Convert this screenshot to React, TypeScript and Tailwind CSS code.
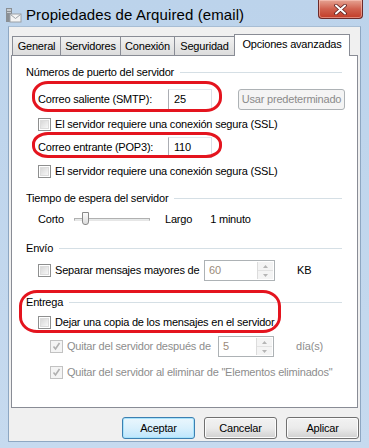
import React from "react";

const F = { fontFamily: '"Segoe UI", "Liberation Sans", Arial, sans-serif' };

function Check({ disabled = false, checked = false }: { disabled?: boolean; checked?: boolean }) {
  return (
    <div
      className={
        "w-[13px] h-[13px] shrink-0 border flex items-center justify-center " +
        (disabled ? "border-[#c2c2c2] bg-[#f4f4f4]" : "border-[#8e8f8f] bg-white")
      }
    >
      <div
        className={
          "w-[9px] h-[9px] flex items-center justify-center " +
          (disabled ? "bg-[#f4f4f4]" : "bg-gradient-to-br from-[#d8d8d8] to-[#f7f7f7] border border-[#dcdcdc]")
        }
      >
        {checked && (
          <svg width="9" height="9" viewBox="0 0 9 9">
            <path d="M1.5 4.5 L3.5 7 L7.5 1" fill="none" stroke="#b0b0b0" strokeWidth="1.6" />
          </svg>
        )}
      </div>
    </div>
  );
}

function Group({ label, mt }: { label: string; mt: string }) {
  return (
    <div className={"flex items-center h-[16px] whitespace-nowrap " + mt}>
      <span>{label}</span>
      <div className="flex-1 h-px bg-[#d5dfe5] ml-[6px]" />
    </div>
  );
}

function Spin({ value, w }: { value: string; w: string }) {
  return (
    <div className={"h-[21px] shrink-0 border border-[#adb2b5] bg-white flex " + w}>
      <div className="flex-1 pl-[4px] text-[#9a8a7a] leading-[19px]">{value}</div>
      <div className="w-[16px] flex flex-col border-l border-[#dcdcdc] my-[1px] mr-[1px]">
        <div className="flex-1 flex items-center justify-center border-b border-[#e2e2e2] bg-[#f4f4f4]">
          <svg width="5" height="3" viewBox="0 0 5 3"><path d="M0 3 L2.5 0 L5 3Z" fill="#b5b5b5" /></svg>
        </div>
        <div className="flex-1 flex items-center justify-center bg-[#f4f4f4]">
          <svg width="5" height="3" viewBox="0 0 5 3"><path d="M0 0 L2.5 3 L5 0Z" fill="#b5b5b5" /></svg>
        </div>
      </div>
    </div>
  );
}

function Btn({ label, def = false }: { label: string; def?: boolean }) {
  return (
    <div
      className={
        "w-[73px] h-[22px] rounded-[3px] border flex items-center justify-center text-black " +
        (def
          ? "border-[#3c7fb1] bg-gradient-to-b from-[#eaf6fd] via-[#d9f0fc] to-[#bee6fd] shadow-[inset_0_0_0_1px_#a7e3fb]"
          : "border-[#707070] bg-gradient-to-b from-[#f2f2f2] via-[#ebebeb] to-[#d0d0d0] shadow-[inset_0_0_0_1px_#fcfcfc]")
      }
    >
      {label}
    </div>
  );
}

export default function App() {
  return (
    <div
      className="relative w-[369px] h-[448px] overflow-hidden bg-gradient-to-b from-[#bcd3eb] to-[#c6daef] text-black"
      style={F}
    >
      {/* Title bar */}
      <div className="h-[25px] flex items-center pl-[5px] relative">
        <svg width="17" height="17" viewBox="0 0 17 17" className="mt-[5px]">
          <rect x="1" y="1" width="6" height="14" fill="#8a8f94" />
          <rect x="2" y="2" width="4" height="2" fill="#c8ccd0" />
          <rect x="2" y="5" width="4" height="1" fill="#c8ccd0" />
          <rect x="5" y="7" width="11" height="8" fill="#f4f4f4" stroke="#9aa0a6" />
          <path d="M5.5 7.5 L10.5 11.5 L15.5 7.5" fill="none" stroke="#9aa0a6" />
        </svg>
        <span className="ml-[4px] text-[15px] mt-[6px] tracking-[0.1px]">Propiedades de Arquired (email)</span>
        <div className="absolute right-[6px] top-0 w-[45px] h-[19px] rounded-b-[4px] border border-t-0 border-[#6b2a2a] bg-gradient-to-b from-[#e5a393] via-[#d0614f] to-[#c23a26] flex items-center justify-center shadow-[inset_0_0_0_1px_rgba(255,210,200,0.5)]">
          <svg width="13" height="11" viewBox="0 0 13 11">
            <path d="M2 1.5 L11 9.5 M11 1.5 L2 9.5" stroke="#5a1e1e" strokeWidth="3.6" strokeLinecap="round" />
            <path d="M2 1.5 L11 9.5 M11 1.5 L2 9.5" stroke="#ffffff" strokeWidth="2" strokeLinecap="round" />
          </svg>
        </div>
      </div>

      {/* Client area */}
      <div className="absolute left-[8px] right-[8px] top-[26px] bottom-[6px] bg-[#f0f0f0] border border-[#8ea7c2] border-t-[#a7bdd4] text-[11px] tracking-[-0.2px] whitespace-nowrap">
        {/* Tabs */}
        <div className="relative h-[28px] pl-[3px] pt-[7px] flex items-end">
          {[
            ["General", "w-[49px]"],
            ["Servidores", "w-[61px]"],
            ["Conexión", "w-[55px]"],
            ["Seguridad", "w-[61px]"],
          ].map(([t, w]) => (
            <div
              key={t}
              className={
                "h-[19px] shrink-0 border border-b-0 border-[#898c95] -mr-px bg-gradient-to-b from-[#f2f2f2] to-[#dcdcdc] flex items-center justify-center " +
                w
              }
            >
              {t}
            </div>
          ))}
          <div className="relative z-10 shrink-0 w-[116px] h-[22px] border border-b-0 border-[#898c95] bg-white -mb-px flex items-center justify-center pb-[2px]">
            Opciones avanzadas
          </div>
        </div>

        {/* Panel */}
        <div className="mx-[2px] h-[353px] border border-[#898c95] bg-white pl-[14px] pr-[15px] pt-[8px]">
          <Group label="Números de puerto del servidor" mt="" />
          <div className="flex items-center h-[20px] mt-[9px] pl-[12px]">
            <span className="w-[130px] shrink-0">Correo saliente (SMTP):</span>
            <div className="w-[44px] h-[21px] shrink-0 border border-[#abadb3] border-t-[#e3e9ef] border-r-[#dbdfe6] bg-white pl-[5px] leading-[19px]">25</div>
            <div className="ml-[26px] w-[107px] h-[21px] shrink-0 rounded-[3px] border border-[#adb2b5] bg-[#f4f4f4] text-[#8b8b8b] flex items-center justify-center">
              Usar predeterminado
            </div>
          </div>
          <div className="flex items-center h-[16px] mt-[7px] pl-[12px] gap-[4px]">
            <Check />
            <span>El servidor requiere una conexión segura (SSL)</span>
          </div>
          <div className="flex items-center h-[20px] mt-[5px] pl-[12px]">
            <span className="w-[130px] shrink-0">Correo entrante (POP3):</span>
            <div className="w-[44px] h-[21px] shrink-0 border border-[#abadb3] border-t-[#e3e9ef] border-r-[#dbdfe6] bg-white pl-[5px] leading-[19px]">110</div>
          </div>
          <div className="flex items-center h-[16px] mt-[6px] pl-[12px] gap-[4px]">
            <Check />
            <span>El servidor requiere una conexión segura (SSL)</span>
          </div>

          <Group label="Tiempo de espera del servidor" mt="mt-[11px]" />
          <div className="flex items-center h-[16px] mt-[5px] pl-[12px]">
            <span className="w-[36px] shrink-0">Corto</span>
            <div className="relative w-[76px] h-[16px] shrink-0 flex items-center">
              <div className="w-full h-[3px] border border-[#b0b0b0] border-b-[#e6e6e6] bg-[#e7eaea]" />
              <div className="absolute left-[8px] top-[1px] w-[7px] h-[13px] border border-[#8a8a8a] rounded-b-[3px] bg-gradient-to-b from-[#fcfcfc] to-[#dcdcdc]" />
            </div>
            <span className="ml-[15px]">Largo</span>
            <span className="ml-[18px]">1 minuto</span>
          </div>

          <Group label="Envío" mt="mt-[13px]" />
          <div className="flex items-center h-[21px] mt-[4px] pl-[12px]">
            <Check />
            <span className="ml-[4px] w-[149px] shrink-0">Separar mensajes mayores de</span>
            <Spin value="60" w="w-[71px]" />
            <span className="ml-[22px]">KB</span>
          </div>

          <Group label="Entrega" mt="mt-[13px]" />
          <div className="flex items-center h-[16px] mt-[4px] pl-[12px] gap-[4px]">
            <Check />
            <span>Dejar una copia de los mensajes en el servidor</span>
          </div>
          <div className="flex items-center h-[21px] mt-[6px] pl-[24px] text-[#8d8d8d]">
            <Check disabled checked />
            <span className="ml-[4px] w-[151px] shrink-0">Quitar del servidor después de</span>
            <Spin value="5" w="w-[56px]" />
            <span className="ml-[22px]">día(s)</span>
          </div>
          <div className="flex items-center h-[16px] mt-[7px] pl-[24px] gap-[4px] text-[#8d8d8d]">
            <Check disabled checked />
            <span>Quitar del servidor al eliminar de "Elementos eliminados"</span>
          </div>
        </div>

        {/* Buttons */}
        <div className="flex justify-end gap-[9px] pr-[1px] mt-[9px]">
          <Btn label="Aceptar" def />
          <Btn label="Cancelar" />
          <Btn label="Aplicar" />
        </div>
      </div>

      {/* Red highlight marks */}
      <div className="absolute left-[32px] top-[81px] w-[190px] h-[31px] border-[3px] border-[#e4141e] rounded-[16px/14px]" />
      <div className="absolute left-[32px] top-[132px] w-[190px] h-[26px] border-[3px] border-[#e4141e] rounded-[16px/12px]" />
      <div className="absolute left-[19px] top-[290px] w-[262px] h-[43px] border-[3px] border-[#e4141e] rounded-[18px/16px]" />
    </div>
  );
}
